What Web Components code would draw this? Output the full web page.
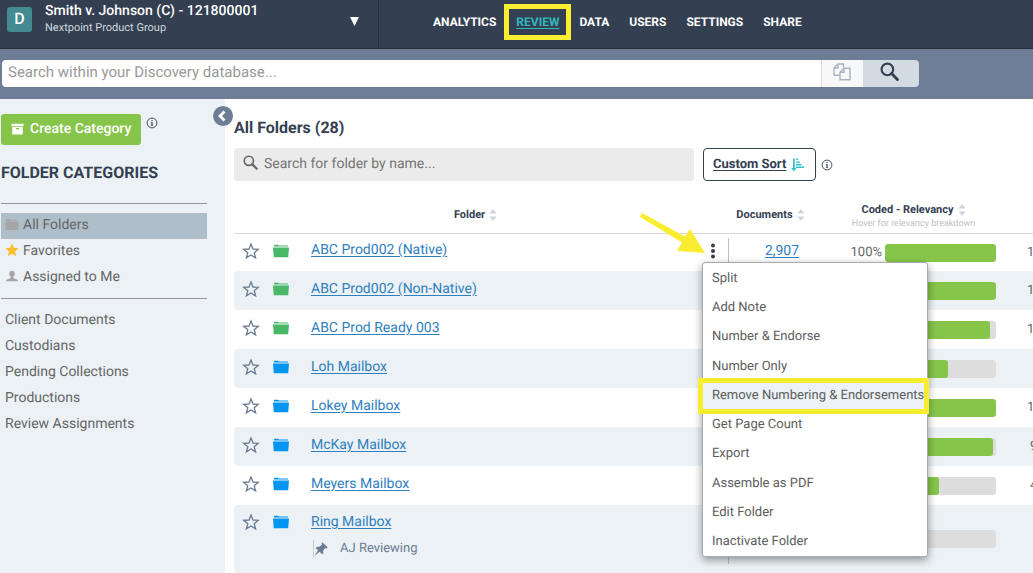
<!DOCTYPE html>
<html lang="en">
<head>
<meta charset="utf-8">
<meta name="viewport" content="width=device-width, initial-scale=1">
<title>Review - All Folders</title>
<style>
  :root {
    --navy: #344052;
    --slate: #6c7d95;
    --pale: #ebf1f5;
    --grey-text: #666;
    --link: #2f80bf;
    --green: #86c54a;
    --teal: #30b8bd;
    --mark: #f9ed32;
  }
  html, body { margin: 0; height: 100%; }
  body {
    display: flex;
    flex-direction: column;
    overflow: hidden;
    background: #fff;
    color: var(--navy);
    font-family: Roboto, "Liberation Sans", sans-serif;
    font-size: 14px;
    text-rendering: geometricPrecision;
  }
  main { display: flex; flex: 1; min-height: 0; }
</style>
</head>
<body>
<app-header case-name="Smith v. Johnson (C) - 121800001" group="Nextpoint Product Group" initial="D">
  <nav-link>ANALYTICS</nav-link>
  <nav-link current>REVIEW</nav-link>
  <nav-link>DATA</nav-link>
  <nav-link>USERS</nav-link>
  <nav-link>SETTINGS</nav-link>
  <nav-link>SHARE</nav-link>
</app-header>
<database-search></database-search>
<main>
  <side-bar>
    <category-link slot="quick" icon="folder" color="#a6a6a6" selected>All Folders</category-link>
    <category-link slot="quick" icon="star-full" color="#fcc02e">Favorites</category-link>
    <category-link slot="quick" icon="person" color="#a6a6a6">Assigned to Me</category-link>
    <category-link>Client Documents</category-link>
    <category-link>Custodians</category-link>
    <category-link>Pending Collections</category-link>
    <category-link>Productions</category-link>
    <category-link>Review Assignments</category-link>
  </side-bar>
  <folder-panel></folder-panel>
</main>

<script>
const ICONS = {
  folder: ['0 0 16 14', '<path fill="currentColor" d="M1 2.6V1.3L1.5.8H5l1 .8h9v1z"/><path fill="currentColor" d="M0 3.6h16L15.200 13.300H.8z"/>'],
  'star-full': ['0 0 16 16', '<path fill="currentColor" d="M8 .5l2.200 5 5.400.5-4.100 3.600 1.200 5.400L8 12.200 3.300 15l1.200-5.400L.4 6l5.400-.5z"/>'],
  star: ['0 0 18 18', '<path fill="none" stroke="currentColor" stroke-width="1.300" stroke-linejoin="miter" d="M9 2l2 5 5.300.3-4.100 3.400 1.400 5.200L9 13l-4.600 2.900 1.400-5.200L1.700 7.300 7 7z"/>'],
  person: ['0 0 14 14', '<path fill="currentColor" d="M7 .8c2 0 3.200 1.400 3.200 3.300 0 1.700-.7 3.200-1.700 3.900v1.200l4.300 1.800c.8.3 1.200.8 1.200 1.700v.5H0v-.5c0-.9.4-1.400 1.200-1.700l4.300-1.800V8C4.500 7.300 3.800 5.800 3.800 4.100 3.800 2.200 5 .8 7 .8z"/>'],
  search: ['0 0 18 18', '<circle cx="7" cy="7" r="5.500" fill="none" stroke="currentColor" stroke-width="2"/><path d="M11 11l5.500 5.500" stroke="currentColor" stroke-width="2.700" stroke-linecap="round"/>'],
  copy: ['0 0 18 18', '<g fill="none" stroke="currentColor" stroke-width="1.400"><path d="M6.500 12.300H1V5l4-4h5.500v3.500M5 1v4H1"/><path d="M11 5.200h6v11.500H7V9.200zM11 5.200v4H7"/></g>'],
  box: ['0 0 13 12', '<path fill="currentColor" d="M.5.8h12v2.400H.5zM1.200 4h10.600v7.500H1.200zM5 5v1.200h3V5z" fill-rule="evenodd"/>'],
  info: ['0 0 12 12', '<circle cx="6" cy="6" r="4.900" fill="none" stroke="currentColor" stroke-width=".9"/><path fill="currentColor" d="M5.400 2.900h1.200v1.200H5.400zM4.900 4.900h1.700v3.200h.6v.7H4.800v-.7h.6V5.600h-.5z"/>'],
  sort: ['0 0 14 14', '<path fill="currentColor" d="M2 .5h1.700V10H5.500L2.900 13.500.2 10H2zM5 .5h2v1.400H5zM5 3.400h4v1.400H5zM5 6h5.500v1.400H5zM5 8.600h8v1.400H5z"/>'],
  sorter: ['0 0 8 14', '<path fill="#cbd5df" d="M4 1l3.500 4.500h-7zM4 13L.5 8.500h7z"/>'],
  pin: ['0 0 14 14', '<path fill="currentColor" d="M8.300.3l5.400 5.200-1.300.9-1-.3-2.200 2.300.2 2.800-1.300 1.100-2.500-2.500L.3 14l3.700-5.800-2.400-2.300 1.300-1.200 2.700.1L8 2.500l-.4-1z"/>'],
  chevron: ['0 0 10 12', '<path d="M7.500 1.500L3 6l4.500 4.500" fill="none" stroke="currentColor" stroke-width="2.800"/>'],
  dots: ['0 0 6 16', '<g fill="currentColor"><circle cx="3" cy="2.500" r="2"/><circle cx="3" cy="8" r="2"/><circle cx="3" cy="13.500" r="2"/></g>'],
  arrow: ['0 0 66 42', '<path fill="#f9ed32" d="M2 1l43 23.500 5-7.500 15 24-28-2 5-8.500L0 5z"/>']
};
const svg = (name, w, h, extra = '') =>
  `<svg class="${name} ${extra}" width="${w}" height="${h}" viewBox="${ICONS[name][0]}" aria-hidden="true">${ICONS[name][1]}</svg>`;

class Base extends HTMLElement {
  connectedCallback() {
    if (this.shadowRoot) return;
    this.attachShadow({ mode: 'open' }).innerHTML =
      `<style>*{box-sizing:border-box} svg{display:block;flex:none} button,input{font:inherit;margin:0;text-rendering:inherit} ${this.css()}</style>${this.html()}`;
  }
}

customElements.define('nav-link', class extends Base {
  css() { return `
    :host { display: block; position: relative; font-size: 12px; line-height: 16px; }
    a { color: #fff; font-weight: 700; text-decoration: none; }
    :host([current]) a { color: var(--teal); text-decoration: underline; text-underline-offset: 2px; }
    :host([current])::after { content: ""; position: absolute; inset: -10px -12px; border: 5px solid var(--mark); pointer-events: none; }`; }
  html() { return `<a href="#"><slot></slot></a>`; }
});

customElements.define('app-header', class extends Base {
  css() { return `
    :host { display: flex; flex: none; height: 49px; box-sizing: border-box; background: var(--navy); border-bottom: 1px solid #262f3e; }
    .case { display: flex; align-items: flex-start; width: 379px; padding: 0 19px 0 7px; border: 0; border-right: 1px solid #262f3e; background: none; color: #fff; text-align: left; }
    .badge { width: 25px; height: 25px; margin-top: 7px; border-radius: 3px; background: #438b90; font-size: 16px; font-weight: 500; line-height: 23px; text-align: center; }
    .names { flex: 1; margin-left: 13px; padding-top: 2px; }
    .name { font-size: 14px; font-weight: 500; line-height: 18px; }
    .group { color: #cfd6df; font-size: 11px; line-height: 16px; }
    .caret { width: 9px; height: 9px; margin-top: 17px; background: #fff; clip-path: polygon(0 0, 100% 0, 50% 100%); }
    nav { display: flex; align-items: flex-start; gap: 20px; padding: 14px 0 0 54px; }`; }
  html() { return `
    <button class="case" aria-label="Choose case">
      <span class="badge">${this.getAttribute('initial')}</span>
      <span class="names"><div class="name">${this.getAttribute('case-name')}</div><div class="group">${this.getAttribute('group')}</div></span>
      <span class="caret"></span>
    </button>
    <nav><slot></slot></nav>`; }
});

customElements.define('database-search', class extends Base {
  css() { return `
    :host { display: block; flex: none; padding: 11px 2px 12px; background: var(--slate); }
    form { display: flex; height: 27px; max-width: 917px; border-radius: 4px; overflow: hidden; }
    input { flex: 1; min-width: 0; padding: 0 6px 4px; border: 0; background: #fff; font-size: 15px; outline: 0; }
    input::placeholder { color: #999; opacity: 1; }
    button { display: flex; align-items: center; justify-content: center; border: 0; padding: 0; }
    .paste { width: 42px; background: #f8f8f8; color: #a9b3c1; border-left: 1px solid #ddd; padding: 0 2px 4px 0; }
    .go { width: 56px; background: #d2dae2; color: var(--navy); padding: 0 4px 4px 0; }`; }
  html() { return `
    <form>
      <input type="text" aria-label="Search database" placeholder="Search within your Discovery database...">
      <button class="paste" type="button" aria-label="Paste list">${svg('copy', 18, 18)}</button>
      <button class="go" type="button" aria-label="Search">${svg('search', 19, 19)}</button>
    </form>`; }
});

customElements.define('category-link', class extends Base {
  css() { return `
    :host { display: block; }
    a { display: flex; align-items: center; height: 26px; padding: 0 4px; color: var(--grey-text); font-size: 14px; line-height: 24px; text-decoration: none; }
    :host([selected]) a { background: #afbfca; }
    i { display: flex; justify-content: center; width: 14px; margin-right: 4px; padding-bottom: 4px; color: ${this.getAttribute('color') || 'inherit'}; }
    i + span { padding-bottom: 2px; }`; }
  html() {
    const icon = this.getAttribute('icon');
    const size = { folder: [14, 13], 'star-full': [14, 14], person: [12, 12] }[icon];
    return `<a href="#">${icon ? `<i>${svg(icon, ...size)}</i>` : ''}<span><slot></slot></span></a>`;
  }
});

customElements.define('side-bar', class extends Base {
  css() { return `
    :host { display: block; position: relative; flex: none; box-sizing: border-box; width: 225px; padding: 15px 18px 0 1px; background: var(--pale); }
    .top { display: flex; align-items: flex-start; gap: 5px; }
    .create { display: flex; align-items: center; gap: 6px; height: 31px; padding: 0 10px 2px; border: 0; border-radius: 3px; background: var(--green); color: #fff; font-size: 14px; font-weight: 500; white-space: nowrap; }
    .info { margin-top: 3px; }
    h2 { margin: 18px 0 20px; font-size: 16px; font-weight: 700; line-height: 20px; }
    hr { height: 1px; margin: 0; border: 0; background: #949699; }
    .quick { padding: 9px 0 7px; }
    .quick + hr + nav { padding-top: 8px; }
    .collapse { position: absolute; top: 6px; right: -9px; display: flex; align-items: center; justify-content: center; width: 22px; height: 22px; padding: 0 2px 0 0; border: 1px solid #fff; border-radius: 50%; background: var(--slate); color: #fff; z-index: 1; }`; }
  html() { return `
    <div class="top"><button class="create">${svg('box', 13, 12)}Create Category</button>${svg('info', 12, 12)}</div>
    <h2>FOLDER CATEGORIES</h2>
    <hr><nav class="quick"><slot name="quick"></slot></nav>
    <hr><nav><slot></slot></nav>
    <button class="collapse" aria-label="Collapse sidebar">${svg('chevron', 10, 12)}</button>`; }
});

customElements.define('context-menu', class extends Base {
  css() { return `
    :host { display: block; }
    ul { display: grid; grid-template-columns: minmax(0, 1fr); grid-auto-rows: 1fr; width: 226px; min-height: 295px; margin: 0; padding: 0; list-style: none; background: #fff; border: 1px solid #aaa; border-radius: 3px; box-shadow: 0 3px 8px rgba(0,0,0,.4); box-sizing: border-box; }
    li { position: relative; display: flex; }
    button { flex: 1; min-width: 0; padding: 3px 9px 0; border: 0; background: none; color: #5d5d5d; font-size: 13px; line-height: 26px; text-align: left; white-space: nowrap; }
    .on button { background: var(--pale); }
    .on::after { content: ""; position: absolute; inset: -2px -2px -5px -5px; border: 5px solid var(--mark); pointer-events: none; }`; }
  html() {
    const items = ['Split', 'Add Note', 'Number &amp; Endorse', 'Number Only', 'Remove Numbering &amp; Endorsements', 'Get Page Count', 'Export', 'Assemble as PDF', 'Edit Folder', 'Inactivate Folder'];
    return `<ul>${items.map((t, i) => `<li class="${i === 4 ? 'on' : ''}"><button>${t}</button></li>`).join('')}</ul>`;
  }
});

customElements.define('progress-bar', class extends Base {
  css() { return `
    :host { display: block; width: 111px; height: 18px; border-radius: 3px; background: #ddd; overflow: hidden; }
    div { width: ${this.getAttribute('value')}%; height: 100%; border-radius: 3px; background: var(--green); }`; }
  html() { return `<div></div>`; }
});

customElements.define('folder-table', class extends Base {
  css() { return `
    :host { display: block; overflow: hidden; margin-top: 14px; }
    table { width: calc(100% + 22px); table-layout: fixed; border-collapse: separate; border-spacing: 0; }
    th { height: 39px; padding: 2px 23px 0 0; border-bottom: 1px solid #d9d9d9; font-size: 11px; font-weight: 700; line-height: 14px; }
    th.folder { padding-right: 12px; }
    th.coded { padding-top: 6px; }
    th small { display: block; color: #c2c2c2; font-size: 9px; font-weight: 400; white-space: nowrap; }
    .label { display: flex; align-items: center; justify-content: center; gap: 4px; white-space: nowrap; }
    td { height: 39px; padding: 0; vertical-align: middle; }
    tbody tr:first-child td { height: 37px; }
    tbody tr:last-child td { height: 68px; }
    tr:nth-child(even) td { background: var(--pale); }
    td:first-child { border-radius: 4px 0 0 4px; }
    td a { color: var(--link); text-decoration: underline; text-underline-offset: 2px; }
    .mark, .kind, .name { padding-bottom: 3px; }
    .icon { display: block; padding: 0; border: 0; background: none; }
    .mark .icon { margin-left: 8px; color: var(--slate); }
    .kind svg { margin-left: 5px; }
    .name { font-size: 14px; line-height: 20px; white-space: nowrap; }
    tr:first-child .name { padding-bottom: 5px; }
    tr:last-child .name { padding-bottom: 8px; }
    tr:last-child .mark, tr:last-child .kind { vertical-align: top; padding-top: 8px; }
    tr:last-child .kind { padding-top: 10px; }
    .note { display: flex; align-items: center; gap: 12px; height: 18px; margin: 8px 0 0 2px; border-left: 1px solid #c9ccd1; color: var(--slate); font-size: 13px; }
    .more .cell { position: relative; display: flex; align-items: center; justify-content: center; height: 30px; padding: 0 5px 4px 0; border-right: 1px solid #bfbfbf; }
    tr:last-child .cell { height: 50px; }
    .more .icon { color: var(--navy); }
    context-menu { position: absolute; top: 24px; left: -1px; z-index: 2; }
    .arrow { position: absolute; top: -26px; right: 22px; z-index: 3; }
    .docs { padding-bottom: 3px; text-align: center; font-size: 14px; }
    .bar { display: flex; align-items: center; gap: 3px; padding-left: 12px; font-size: 13px; color: var(--grey-text); }
    .bar span { width: 35px; text-align: right; }
    .next { padding-left: 12px; color: var(--grey-text); font-size: 13px; }
    .next.short { padding-left: 15px; }`; }
  html() {
    const G = '#48b868', B = '#0095f0';
    const rows = [
      ['ABC Prod002 (Native)', G, 100, '1'],
      ['ABC Prod002 (Non-Native)', G, 100, '1'],
      ['ABC Prod Ready 003', G, 95, '1'],
      ['Loh Mailbox', B, 57, ''],
      ['Lokey Mailbox', B, 100, '1'],
      ['McKay Mailbox', B, 97, '9'],
      ['Meyers Mailbox', B, 49, '4'],
      ['Ring Mailbox', B, 0, '', 'AJ Reviewing']
    ];
    const head = t => `<span class="label">${t}${svg('sorter', 8, 14)}</span>`;
    const body = rows.map(([name, color, pct, next, note], i) => `
      <tr>
        <td class="mark"><button class="icon" aria-label="Favorite ${name}">${svg('star', 18, 18)}</button></td>
        <td class="kind" style="color:${color}">${svg('folder', 16, 14)}</td>
        <td class="name"><a href="#">${name}</a>${note ? `<div class="note">${svg('pin', 14, 14)}${note}</div>` : ''}</td>
        <td class="more"><div class="cell">${i ? '' : `<button class="icon" aria-label="Folder actions">${svg('dots', 6, 16)}</button>${svg('arrow', 66, 42)}<context-menu></context-menu>`}</div></td>
        <td class="docs">${i ? '' : '<a href="#">2,907</a>'}</td>
        <td><div class="bar"><span>${i ? '' : '100%'}</span><progress-bar value="${pct}"></progress-bar></div></td>
        <td class="next ${next > 1 ? 'short' : ''}">${next}</td>
      </tr>`).join('');
    return `<table>
      <colgroup><col style="width:34px"><col style="width:43px"><col><col style="width:26px"><col style="width:106px"><col style="width:180px"><col style="width:40px"></colgroup>
      <thead><tr>
        <th class="folder" colspan="4">${head('Folder')}</th>
        <th>${head('Documents')}</th>
        <th class="coded">${head('Coded - Relevancy')}<small>Hover for relevancy breakdown</small></th>
        <th></th>
      </tr></thead>
      <tbody>${body}</tbody></table>`;
  }
});

customElements.define('folder-panel', class extends Base {
  css() { return `
    :host { display: block; flex: 1; min-width: 0; padding: 19px 0 0 9px; }
    h1 { margin: 0 0 10px; font-size: 16px; font-weight: 700; line-height: 20px; }
    .tools { display: flex; align-items: center; gap: 9px; }
    label { display: flex; align-items: center; gap: 6px; flex: 0 1 460px; height: 33px; padding: 0 0 2px 9px; border-radius: 4px; background: #ebebeb; color: var(--grey-text); box-sizing: border-box; }
    label svg { margin-bottom: 2px; }
    input { flex: 1; min-width: 0; padding: 0; border: 0; background: none; font-size: 14px; outline: 0; }
    input::placeholder { color: #757575; opacity: 1; }
    .custom { display: flex; align-items: center; gap: 5px; height: 33px; padding: 0 10px 0 9px; border: 1px solid var(--navy); border-radius: 4px; background: #fff; color: var(--navy); font-size: 13px; font-weight: 700; white-space: nowrap; }
    .custom span { text-decoration: underline; text-underline-offset: 2px; }
    .custom svg { color: #2cc5cc; }
    .info { margin-left: -4px; }`; }
  html() { return `
    <h1>All Folders (28)</h1>
    <div class="tools">
      <label>${svg('search', 15, 15)}<input type="text" aria-label="Search for folder by name" placeholder="Search for folder by name..."></label>
      <button class="custom"><span>Custom Sort</span>${svg('sort', 14, 14)}</button>
      ${svg('info', 12, 12)}
    </div>
    <folder-table></folder-table>`; }
});
</script>
</body>
</html>
